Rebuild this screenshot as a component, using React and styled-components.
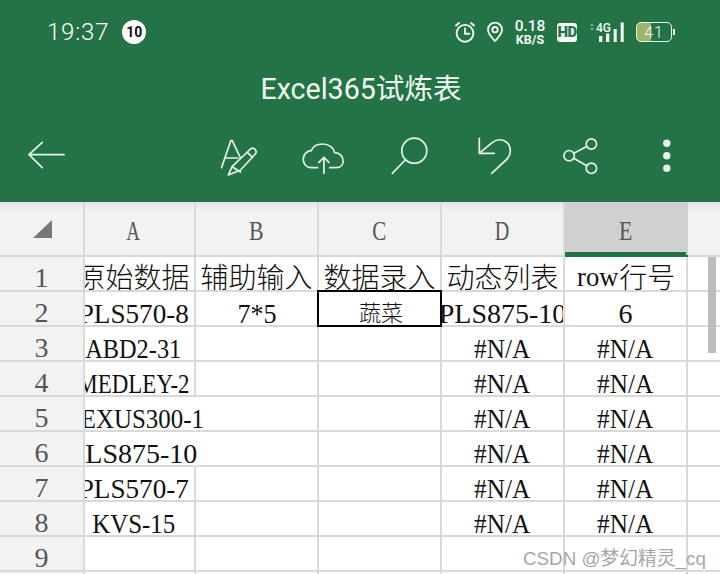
import React from 'react'
import styled, { createGlobalStyle } from 'styled-components'

const GREEN = '#237347'
const LINE = '#d9d9d9'
const ICON = '#e6f2ec'

const Global = createGlobalStyle`
  html, body { margin: 0; padding: 0; background: #fff; }
  * { box-sizing: border-box; }
`

const Page = styled.div`
  position: relative;
  width: 720px;
  height: 574px;
  overflow: hidden;
  background: #fff;
  font-family: "Roboto", "Noto Sans CJK SC", sans-serif;
`

const Header = styled.div`
  height: 202px;
  background: ${GREEN};
  color: #fff;
`

const StatusBar = styled.div`
  height: 64px;
  display: flex;
  align-items: center;
  justify-content: space-between;
  padding: 0 45px 0 47px;
`

const StatusLeft = styled.div`
  display: flex;
  align-items: center;
  gap: 13px;
`

const Clock = styled.div`
  font-size: 24px;
  font-weight: 300;
  letter-spacing: 0.8px;
  color: #fff;
`

const Badge = styled.div`
  width: 24px;
  height: 24px;
  border-radius: 50%;
  background: #fff;
  color: #111;
  font-size: 14px;
  font-weight: 700;
  display: flex;
  align-items: center;
  justify-content: center;
`

const StatusRight = styled.div`
  display: flex;
  align-items: center;
  gap: 11px;
`

const Speed = styled.div`
  width: 32px;
  display: flex;
  flex-direction: column;
  align-items: center;
  font-weight: 500;
  color: #f2f8f4;
`

const SpeedValue = styled.span`
  font-size: 15.5px;
  line-height: 15px;
`

const SpeedUnit = styled.span`
  font-size: 12.5px;
  font-weight: 700;
  line-height: 12px;
`

const HdTag = styled.div`
  width: 20px;
  height: 19px;
  border-radius: 3px;
  background: #f4f9f6;
  color: ${GREEN};
  font-size: 15px;
  font-weight: 900;
  letter-spacing: -0.6px;
  display: flex;
  align-items: center;
  justify-content: center;
`

const Network = styled.div`
  position: relative;
  width: 37px;
  height: 20px;
`

const NetworkLabel = styled.span`
  position: absolute;
  left: 8px;
  top: 0;
  font-size: 12px;
  line-height: 12px;
  font-weight: 500;
  color: #f2f8f4;
`

const Battery = styled.div`
  display: flex;
  align-items: center;
  gap: 1px;
`

const BatteryBody = styled.div`
  width: 36px;
  height: 20px;
  border: 1.5px solid #f2f8f4;
  border-radius: 5px;
  background: linear-gradient(90deg, #a0b56c ${p => p.$level}%, transparent ${p => p.$level}%);
  font-size: 16px;
  font-weight: 300;
  letter-spacing: 1px;
  color: #f2f8f4;
  display: flex;
  align-items: center;
  justify-content: center;
`

const BatteryCap = styled.div`
  width: 2px;
  height: 6px;
  background: #f2f8f4;
`

const Title = styled.div`
  height: 48px;
  display: flex;
  align-items: center;
  justify-content: center;
  font-size: 28.6px;
  padding: 0 0 4px 2px;
  color: #f0f7f3;
`

const Toolbar = styled.div`
  height: 90px;
  display: flex;
  align-items: center;
  justify-content: space-between;
  padding: 0 11px 4px 0;
`

const Actions = styled.div`
  display: flex;
`

const ToolIcon = styled.svg`
  display: block;
  width: ${p => p.$w || 85.6}px;
  height: 50px;
  fill: none;
  stroke: ${ICON};
  stroke-width: 1.7;
  stroke-linecap: round;
  stroke-linejoin: round;
`

const Sheet = styled.div`
  position: relative;
`

const HeadRow = styled.div`
  display: flex;
  height: 55px;
  background: linear-gradient(180deg, #e3e3e3 0, #f2f2f2 9px);
  border-bottom: 2px solid ${LINE};
`

const Corner = styled.div`
  position: relative;
  z-index: 2;
  width: 85px;
  flex: none;
  border-right: 2px solid ${LINE};
  display: flex;
  align-items: center;
  justify-content: center;
`

const ColHead = styled.div`
  width: 123px;
  flex: none;
  display: flex;
  align-items: center;
  justify-content: center;
  padding-top: 4px;
  color: #555;
  border-right: 2px solid ${LINE};
  background: ${p => (p.$active ? '#d0d0d0' : 'transparent')};
  ${p => (p.$first ? 'width: 111px; padding-right: 12px;' : '')}
  ${p => (p.$active ? `border-right-color: #d0d0d0; box-shadow: 0 2px 0 ${GREEN}, inset 0 -3px 0 ${GREEN};` : '')}
`

const Row = styled.div`
  display: flex;
  height: 35px;
`

const RowHead = styled.div`
  position: relative;
  z-index: 2;
  width: 85px;
  flex: none;
  background: #f2f2f2;
  border-right: 2px solid ${LINE};
  border-bottom: 2px solid ${LINE};
  color: #555;
  display: flex;
  align-items: flex-end;
  justify-content: center;
`

const Cell = styled.div`
  position: relative;
  width: 123px;
  flex: none;
  height: 35px;
  border-right: 2px solid ${p => (p.$spill ? 'transparent' : LINE)};
  border-bottom: 2px solid ${LINE};
  display: flex;
  align-items: flex-end;
  justify-content: center;
  white-space: nowrap;
  color: #111;
  ${p => (p.$first ? 'margin-left: -12px;' : '')}
  ${p => (p.$clip ? 'overflow: hidden;' : '')}
`

const Selected = styled.div`
  position: absolute;
  inset: -2px;
  border: 2px solid #000;
`

const Latin = styled.span`
  display: inline-block;
  flex: none;
  font-family: "Liberation Serif", serif;
  font-size: 28px;
  line-height: 28px;
  margin-bottom: ${p => p.$mb ?? -3}px;
  transform: scaleX(${p => p.$sx || 1});
`

const Cjk = styled.span`
  flex: none;
  font-family: "Noto Sans CJK SC", sans-serif;
  font-size: ${p => p.$size || 28}px;
  font-weight: 300;
  line-height: 28px;
  margin-left: ${p => (p.$size ? 3 : 0)}px;
`

const Scrollbar = styled.div`
  position: absolute;
  right: 4px;
  top: 55px;
  width: 8px;
  height: 96px;
  background: #bdbdbd;
`

const Watermark = styled.div`
  position: absolute;
  left: 523px;
  top: 543px;
  font-family: "Liberation Sans", "Noto Sans CJK SC", sans-serif;
  font-size: 18.800px;
  color: #a6a6a6;
  white-space: nowrap;
`

const columns = ['A', 'B', 'C', 'D', 'E', 'F']
const headScale = { A: 0.68, B: 0.78, C: 0.75, D: 0.72, E: 0.78 }

const na = <Latin $sx={0.9}>#N/A</Latin>

const rows = [
  {
    A: <Cjk>原始数据</Cjk>,
    B: <Cjk>辅助输入</Cjk>,
    C: <Cjk>数据录入</Cjk>,
    D: <Cjk>动态列表</Cjk>,
    E: <><Latin $sx={0.95} $mb={-1}>row</Latin><Cjk>行号</Cjk></>,
  },
  {
    A: <Latin $sx={0.97}>PLS570-8</Latin>,
    B: <Latin $sx={0.93}>7*5</Latin>,
    C: <Cjk $size={22}>蔬菜</Cjk>,
    D: <Latin>PLS875-10</Latin>,
    E: <Latin>6</Latin>,
    selected: 'C',
    clip: 'D',
  },
  { A: <Latin $sx={0.87}>ABD2-31</Latin>, D: na, E: na },
  { A: <Latin $sx={0.82}>MEDLEY-2</Latin>, D: na, E: na },
  { A: <Latin $sx={0.89}>NEXUS300-1</Latin>, D: na, E: na, spill: true },
  { A: <Latin>PLS875-10</Latin>, D: na, E: na, spill: true },
  { A: <Latin $sx={0.97}>PLS570-7</Latin>, D: na, E: na },
  { A: <Latin $sx={0.89}>KVS-15</Latin>, D: na, E: na },
  {},
  {},
]

const AlarmIcon = () => (
  <svg width="22" height="22" viewBox="0 0 22 22" fill="none" stroke="#f2f8f4" strokeWidth="1.900" strokeLinecap="round" strokeLinejoin="round">
    <circle cx="11" cy="12.300" r="8.400" />
    <path d="M11 7.500v5.200h4.300M2 4.500l3-2.500M20 4.500l-3-2.500" />
  </svg>
)

const PinIcon = () => (
  <svg width="16" height="20" viewBox="0 0 16 20" fill="none" stroke="#f2f8f4" strokeWidth="1.800">
    <path d="M8 19C4.500 15.300 1 11.800 1 7.700a7 7 0 0 1 14 0C15 11.800 11.500 15.300 8 19Z" strokeLinejoin="round" />
    <circle cx="8" cy="7.700" r="2.700" />
  </svg>
)

const SignalIcon = () => (
  <svg width="37" height="20" viewBox="0 0 37 20" style={{ display: 'block' }}>
    <path d="M2 4l2-2.500L6 4ZM2 6l2 2.500L6 6Z" fill="#7fae92" />
    <g fill="#f2f8f4">
      <rect x="11" y="14" width="3.300" height="6" />
      <rect x="18" y="11.500" width="3.300" height="8.500" />
      <rect x="25.700" y="7" width="3" height="13" />
      <rect x="32.700" y="0.500" width="3" height="19.500" />
    </g>
  </svg>
)

const BackIcon = () => (
  <ToolIcon $w={92} viewBox="0 130 92 50">
    <path d="M29 154.700H64M42.300 142.300L29 154.700L42.300 167.700" />
  </ToolIcon>
)

const PenIcon = () => (
  <ToolIcon viewBox="195.200 130 85.600 50">
    <path d="M221.700 167.700L231 140.700h1.500L240.700 158M226.500 158H238" />
    <path d="M228.500 175L232.300 166.700L250.700 149C253 147.300 255 148.500 256 150.500C256.700 151.800 256.500 153 255.500 154L240.700 170L228.500 175ZM232.300 166.700L240.700 172M247.500 152.300L252.800 157.300" fill={GREEN} />
  </ToolIcon>
)

const CloudIcon = () => (
  <ToolIcon viewBox="279.800 130 85.600 50">
    <path d="M316.500 167.700H310C305.500 167.700 302 164 302 159.300C302 154.500 305.500 151 310 150.700C311.500 146.700 316 144 321.500 144C327.500 144 332.300 147.500 333.500 152.700C338.300 152.700 342 156.500 342 161C342 165 339 167.700 335 167.700H328.500" />
    <path d="M322.700 173.300V157.300M317.700 162.300L322.700 157.300L327.700 162.300" />
  </ToolIcon>
)

const SearchIcon = () => (
  <ToolIcon viewBox="365.400 130 85.600 50">
    <circle cx="412.700" cy="150.700" r="12.500" />
    <path d="M403.600 160L390.700 173.300" />
  </ToolIcon>
)

const UndoIcon = () => (
  <ToolIcon viewBox="451 130 85.600 50">
    <path d="M478.300 138.300V153.300H493.300" />
    <path d="M479 152.700L491.500 142.300C497.500 137.500 509 139.500 509.300 151C509.400 155 507.500 157.700 505 160L490.700 173.300" />
  </ToolIcon>
)

const ShareIcon = () => (
  <ToolIcon viewBox="536.600 130 85.600 50">
    <circle cx="590" cy="144" r="5.200" />
    <circle cx="567.700" cy="155.700" r="5.200" />
    <circle cx="590" cy="168.300" r="5.200" />
    <path d="M572.400 153.300L585.300 146.500M572.400 158.300L585.300 165.700" />
  </ToolIcon>
)

const MoreIcon = () => (
  <ToolIcon viewBox="622.200 130 85.600 50">
    <g fill={ICON} stroke="none">
      <circle cx="666" cy="143.300" r="3.700" />
      <circle cx="666" cy="155.700" r="3.700" />
      <circle cx="666" cy="168.300" r="3.700" />
    </g>
  </ToolIcon>
)

const App = () => {
  return (
    <Page>
      <Global />
      <Header>
        <StatusBar>
          <StatusLeft>
            <Clock>19:37</Clock>
            <Badge>10</Badge>
          </StatusLeft>
          <StatusRight>
            <AlarmIcon />
            <PinIcon />
            <Speed>
              <SpeedValue>0.18</SpeedValue>
              <SpeedUnit>KB/S</SpeedUnit>
            </Speed>
            <HdTag>HD</HdTag>
            <Network>
              <SignalIcon />
              <NetworkLabel>4G</NetworkLabel>
            </Network>
            <Battery>
              <BatteryBody $level={41}>41</BatteryBody>
              <BatteryCap />
            </Battery>
          </StatusRight>
        </StatusBar>
        <Title>Excel365试炼表</Title>
        <Toolbar>
          <BackIcon />
          <Actions>
            <PenIcon />
            <CloudIcon />
            <SearchIcon />
            <UndoIcon />
            <ShareIcon />
            <MoreIcon />
          </Actions>
        </Toolbar>
      </Header>
      <Sheet>
        <HeadRow>
          <Corner>
            <svg width="24" height="20" viewBox="0 0 24 20">
              <path d="M3 19L22 1V19Z" fill="#777" />
            </svg>
          </Corner>
          {columns.map((c, i) => (
            <ColHead key={c} $first={i === 0} $active={c === 'E'}>
              {c !== 'F' && <Latin $sx={headScale[c]} $mb={0}>{c}</Latin>}
            </ColHead>
          ))}
        </HeadRow>
        {rows.map((row, r) => (
          <Row key={r}>
            <RowHead>{r < 9 && <Latin $mb={-2}>{r + 1}</Latin>}</RowHead>
            {columns.map((c, i) => (
              <Cell
                key={c}
                $first={i === 0}
                $spill={row.spill && c === 'A'}
                $clip={row.clip === c}
              >
                {row[c]}
                {row.selected === c && <Selected />}
              </Cell>
            ))}
          </Row>
        ))}
        <Scrollbar />
      </Sheet>
      <Watermark>CSDN @梦幻精灵_cq</Watermark>
    </Page>
  )
}

export default App
